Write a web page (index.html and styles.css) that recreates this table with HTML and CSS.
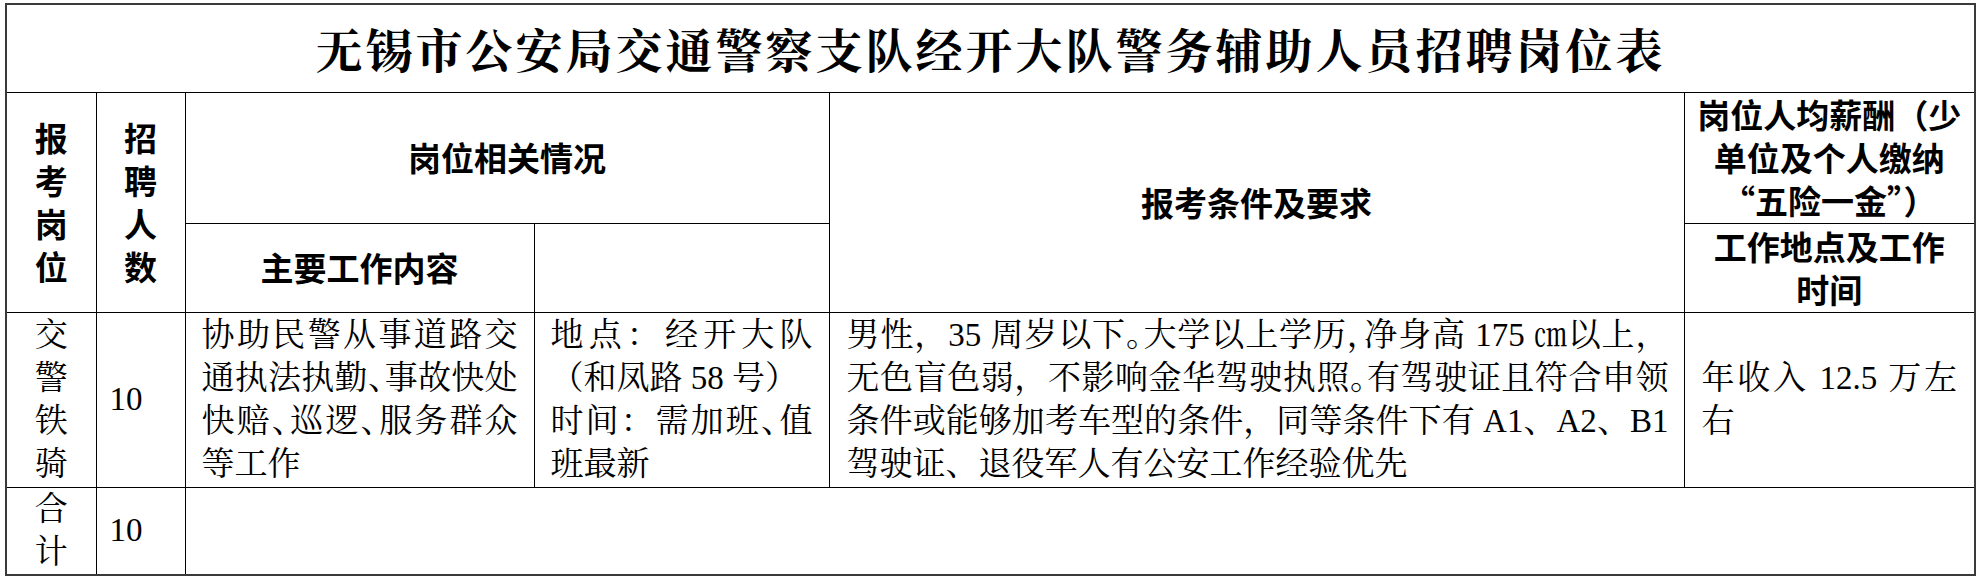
FILE: index.html
```html
<!DOCTYPE html>
<html lang="zh-CN">
<head>
<meta charset="utf-8">
<title>无锡市公安局交通警察支队经开大队警务辅助人员招聘岗位表</title>
<link rel="stylesheet" href="styles.css">
</head>
<body>
<div class="sheet">
<table class="grid">
  <colgroup>
    <col class="c1"><col class="c2"><col class="c3"><col class="c4"><col class="c5"><col class="c6">
  </colgroup>
  <tr class="r-title">
    <td colspan="6" class="title">无锡市公安局交通警察支队经开大队警务辅助人员招聘岗位表</td>
  </tr>
  <tr class="r-h1">
    <td rowspan="2" class="hd vert">报考岗位</td>
    <td rowspan="2" class="hd vert">招聘人数</td>
    <td colspan="2" class="hd">岗位相关情况</td>
    <td rowspan="2" class="hd">报考条件及要求</td>
    <td class="hd pay-h">岗位人均薪酬（少单位及个人缴纳“五险一金”）</td>
  </tr>
  <tr class="r-h2">
    <td class="hd">主要工作内容</td>
    <td class="hd"></td>
    <td class="hd place-h">工作地点及工作时间</td>
  </tr>
  <tr class="r-data">
    <td class="bd vert">交警铁骑</td>
    <td class="bd num">10</td>
    <td class="bd lines p16">
      <span class="ln">协助民警从事道路交</span>
      <span class="ln">通执法执勤<span class="cp">、</span>事故快处</span>
      <span class="ln">快赔<span class="cp">、</span>巡逻<span class="cp">、</span>服务群众</span>
      <span class="ln end">等工作</span>
    </td>
    <td class="bd lines p16">
      <span class="ln">地点：经开大队</span>
      <span class="ln end">（和凤路 58 号）</span>
      <span class="ln">时间：需加班<span class="cp">、</span>值</span>
      <span class="ln end">班最新</span>
    </td>
    <td class="bd lines p17">
      <span class="ln">男性，35 周岁以下<span class="cp">。</span>大学以上学历<span class="cp">，</span>净身高 175 ㎝以上，</span>
      <span class="ln">无色盲色弱，不影响金华驾驶执照<span class="cp">。</span>有驾驶证且符合申领</span>
      <span class="ln">条件或能够加考车型的条件，同等条件下有 A1、A2、B1</span>
      <span class="ln end">驾驶证、退役军人有公安工作经验优先</span>
    </td>
    <td class="bd pay">年收入 12.5 万左右</td>
  </tr>
  <tr class="r-total">
    <td class="bd vert">合计</td>
    <td class="bd num">10</td>
    <td colspan="4" class="bd"></td>
  </tr>
</table>
</div>
</body>
</html>
```
FILE: styles.css
```css
html, body {
  margin: 0;
  padding: 0;
  background: #ffffff;
  color: #000000;
}

.sheet {
  padding: 3px 0 0 5px;
}

.grid {
  border-collapse: collapse;
  table-layout: fixed;
  width: 1969px;
  border: 2px solid #3a3a3a;
}

.c1 { width: 90px; }
.c2 { width: 89px; }
.c3 { width: 349px; }
.c4 { width: 295px; }
.c5 { width: 855px; }
.c6 { width: 291px; }

.grid td {
  border: 1px solid #000000;
  padding: 0;
  vertical-align: middle;
}

.r-title { height: 88px; }
.r-h1 { height: 131px; }
.r-h2 { height: 89px; }
.r-data { height: 175px; }
.r-total { height: 88px; }

.title {
  text-align: center;
  font-family: "KaiTi", "STKaiti", "AR PL UKai CN", "Noto Serif CJK SC", "Noto Sans CJK SC", serif;
  font-weight: 700;
  font-size: 47px;
  letter-spacing: 3px;
  padding-left: 3px;
  line-height: 60px;
}

.hd {
  font-family: "Noto Sans CJK SC", "Noto Sans", sans-serif;
  font-weight: 700;
  font-size: 33px;
  line-height: 43px;
  text-align: center;
}

.grid td.pay-h {
  padding: 0 10px;
}

.grid td.place-h {
  padding: 0 14px;
}

.bd {
  font-family: "Liberation Serif", "Noto Serif CJK SC", "Noto Sans CJK SC", serif;
  font-size: 33px;
  line-height: 43px;
  font-weight: 400;
}

.grid td.vert {
  padding: 0 14px;
  text-align: center;
}

.grid td.num {
  padding-left: 13px;
  text-align: left;
}

.grid td.p16 { padding: 0 16px; }
.grid td.p17 { padding: 0 15px 0 17px; }

.lines .ln {
  display: block;
  text-align: justify;
  text-align-last: justify;
}

.lines .ln.end {
  text-align-last: left;
}

.cp {
  letter-spacing: -0.5em;
}

.grid td.pay {
  padding: 0 17px;
  text-align: justify;
}
```
